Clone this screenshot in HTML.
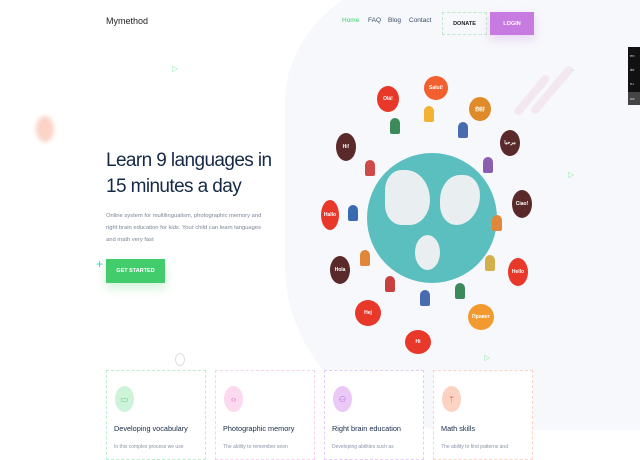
<!DOCTYPE html>
<html><head><meta charset="utf-8"><style>
*{margin:0;padding:0;box-sizing:border-box}
body{width:640px;height:450px;overflow:hidden;background:#fff;font-family:"Liberation Sans",sans-serif;position:relative}
.blob{position:absolute;left:285px;top:-40px;width:420px;height:470px;background:#f7f8fb;border-radius:45% 0 0 40%/30% 0 0 35%}
.logo{position:absolute;left:106px;top:16px;font-size:9px;color:#222}
.nav{position:absolute;top:17px;font-size:6.5px;color:#3a4a66}
.btn{position:absolute;font-size:5.5px;font-weight:bold;display:flex;align-items:center;justify-content:center}
h1{position:absolute;left:106px;top:148px;font-size:19px;line-height:26px;font-weight:normal;color:#162946;letter-spacing:-.6px}
.p{position:absolute;left:106px;top:210px;width:166px;font-size:5.8px;line-height:12px;color:#7a8699}
.card{position:absolute;top:370px;width:100px;height:90px;background:#fff;border:1px dashed}
.ic{position:absolute;left:8px;top:15px;width:19px;height:26px;border-radius:50%;font-size:8px;display:flex;align-items:center;justify-content:center}
.ct{position:absolute;left:7px;top:53px;font-size:7.3px;color:#162946}
.cd{position:absolute;left:7px;top:73px;font-size:5px;color:#8a94a6}
.bub{position:absolute;border-radius:50%;color:#fff;font-size:5px;font-weight:bold;display:flex;align-items:center;justify-content:center}
.kid{position:absolute;width:10px;height:16px;border-radius:5px 5px 2px 2px}
</style></head><body>
<div class="blob"></div>
<div style="position:absolute;left:36px;top:116px;width:18px;height:26px;border-radius:50%;background:#fbd3c7;filter:blur(2px)"></div>
<div class="logo">Mymethod</div>
<div class="nav" style="left:342px;color:#3ecf6e">Home</div>
<div class="nav" style="left:368px">FAQ</div>
<div class="nav" style="left:388px">Blog</div>
<div class="nav" style="left:409px">Contact</div>
<div class="btn" style="left:442px;top:12px;width:45px;height:23px;border:1px dashed #bfe8cb;color:#222">DONATE</div>
<div class="btn" style="left:490px;top:12px;width:44px;height:23px;background:#c77ae0;color:#fff;box-shadow:0 4px 10px rgba(199,122,224,.3)">LOGIN</div>
<div style="position:absolute;left:628px;top:47px;width:12px;height:45px;background:#111;color:#ddd;font-size:4px;line-height:14px;padding:2px 2px">en<br>de<br>ru</div>
<div style="position:absolute;left:628px;top:92px;width:12px;height:13px;background:#444;color:#ddd;font-size:4px;padding:4px 2px">ua</div>
<div style="position:absolute;left:172px;top:64px;color:#8fe6a6;font-size:8px">▷</div>
<div style="position:absolute;left:567px;top:63px;color:#2dd8c0;font-size:12px">+</div>
<div style="position:absolute;left:96px;top:257px;color:#2dd8c0;font-size:12px">+</div>
<div style="position:absolute;left:568px;top:170px;color:#8fe6a6;font-size:8px">▷</div>
<div style="position:absolute;left:484px;top:353px;color:#8fe6a6;font-size:8px">▷</div>
<div style="position:absolute;left:175px;top:353px;width:10px;height:13px;border:1.5px solid #ddd;border-radius:50%"></div>
<h1>Learn 9 languages in<br>15 minutes a day</h1>
<div class="p">Online system for multilingualism, photographic memory and right brain education for kids. Your child can learn languages and math very fast</div>
<div class="btn" style="left:106px;top:259px;width:59px;height:24px;background:#43cc6b;color:#fff;box-shadow:0 5px 10px rgba(67,204,107,.25)">GET STARTED</div>
<div style="position:absolute;left:367px;top:153px;width:130px;height:130px;border-radius:50%;background:#5bbfc0"></div>
<div style="position:absolute;left:385px;top:170px;width:45px;height:55px;border-radius:40% 60% 50% 40%;background:#e9eef0"></div>
<div style="position:absolute;left:440px;top:175px;width:40px;height:50px;border-radius:50% 40% 60% 40%;background:#e9eef0"></div>
<div style="position:absolute;left:415px;top:235px;width:25px;height:35px;border-radius:50%;background:#e9eef0"></div>
<div class="kid" style="left:390px;top:118px;background:#3a8a5a"></div>
<div class="kid" style="left:424px;top:106px;background:#f2b233"></div>
<div class="kid" style="left:458px;top:122px;background:#4a6ab0"></div>
<div class="kid" style="left:483px;top:157px;background:#8a5fb0"></div>
<div class="kid" style="left:492px;top:215px;background:#e0873a"></div>
<div class="kid" style="left:485px;top:255px;background:#d4b04a"></div>
<div class="kid" style="left:455px;top:283px;background:#3a8a5a"></div>
<div class="kid" style="left:420px;top:290px;background:#4a6ab0"></div>
<div class="kid" style="left:385px;top:276px;background:#c84040"></div>
<div class="kid" style="left:360px;top:250px;background:#e0873a"></div>
<div class="kid" style="left:348px;top:205px;background:#3a6ab0"></div>
<div class="kid" style="left:365px;top:160px;background:#d04a4a"></div>
<div class="bub" style="left:377px;top:86px;width:22px;height:26px;background:#e8382a">Olá!</div>
<div class="bub" style="left:424px;top:76px;width:24px;height:24px;background:#f2602f">Salut!</div>
<div class="bub" style="left:469px;top:97px;width:22px;height:24px;background:#e08b2a">你好</div>
<div class="bub" style="left:336px;top:133px;width:20px;height:28px;background:#5a2a2a">Hi!</div>
<div class="bub" style="left:500px;top:130px;width:20px;height:26px;background:#5a2a2a">مرحبا</div>
<div class="bub" style="left:512px;top:190px;width:20px;height:28px;background:#5a2a2a">Ciao!</div>
<div class="bub" style="left:321px;top:200px;width:18px;height:30px;background:#e8382a">Hallo</div>
<div class="bub" style="left:330px;top:256px;width:20px;height:28px;background:#5a2a2a">Hola</div>
<div class="bub" style="left:508px;top:258px;width:20px;height:28px;background:#e8382a">Hello</div>
<div class="bub" style="left:355px;top:300px;width:26px;height:26px;background:#e8382a">Hej</div>
<div class="bub" style="left:468px;top:304px;width:26px;height:26px;background:#f29a2f">Привет</div>
<div class="bub" style="left:405px;top:330px;width:26px;height:24px;background:#e8382a">Hi</div>
<div style="position:absolute;left:528px;top:70px;width:8px;height:50px;background:#f3e8ef;transform:rotate(40deg);border-radius:4px"></div>
<div style="position:absolute;left:548px;top:60px;width:8px;height:60px;background:#f3e8ef;transform:rotate(40deg);border-radius:4px"></div>
<div class="card" style="left:106px;border-color:#bfeccc"><div class="ic" style="background:#cdf3d8;color:#43cc6b">▭</div><div class="ct">Developing vocabulary</div><div class="cd">In this complex process we use</div></div>
<div class="card" style="left:215px;border-color:#f3d3ef"><div class="ic" style="background:#fcd9ef;color:#e06cc4">‹›</div><div class="ct">Photographic memory</div><div class="cd">The ability to remember seen</div></div>
<div class="card" style="left:324px;border-color:#e6ccf4"><div class="ic" style="background:#ebc9f6;color:#a55ad0">⚇</div><div class="ct">Right brain education</div><div class="cd">Developing abilities such as</div></div>
<div class="card" style="left:433px;border-color:#f7d6c7"><div class="ic" style="background:#fcd2c2;color:#e0573a">ᛘ</div><div class="ct">Math skills</div><div class="cd">The ability to find patterns and</div></div>
</body></html>
